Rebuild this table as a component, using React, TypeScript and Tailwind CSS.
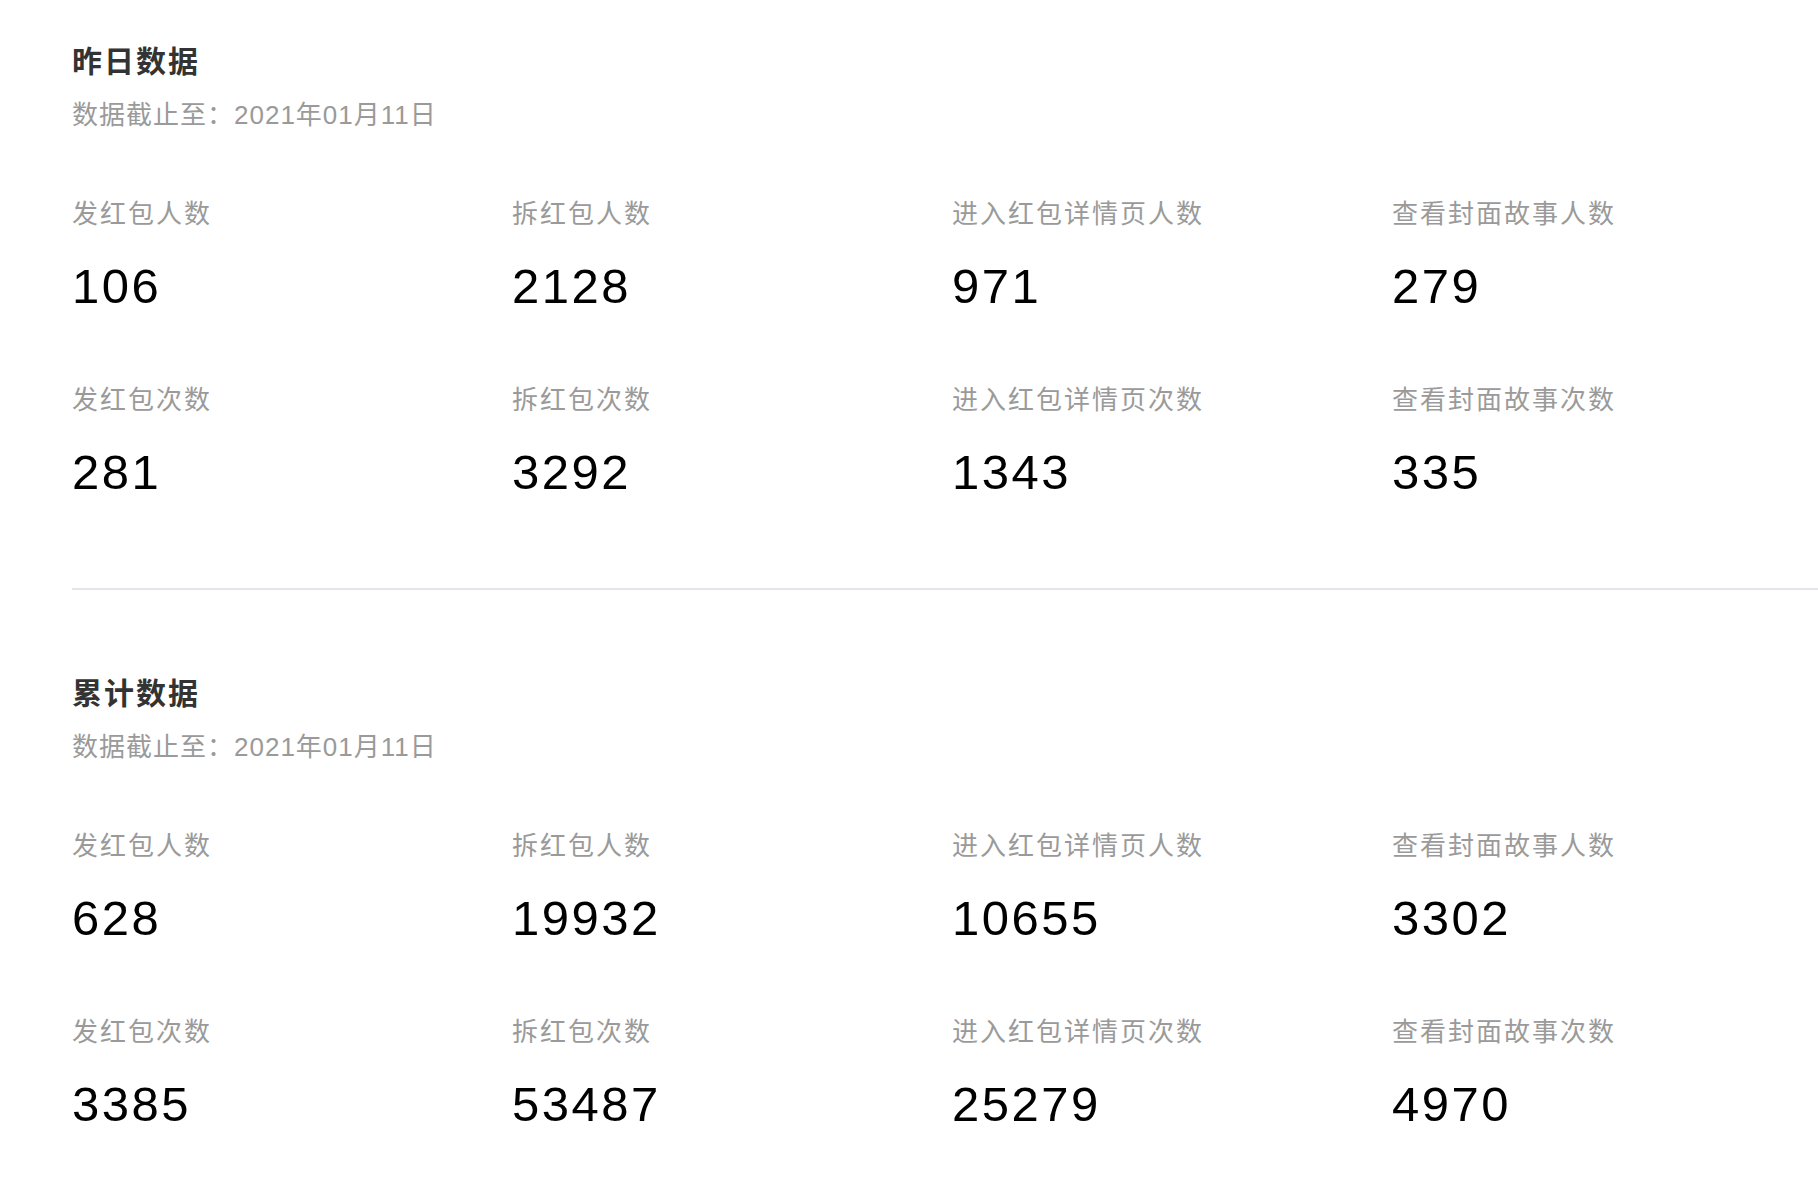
const sections = [
  {
    title: '昨日数据',
    date: '2021年01月11日',
    stats: [
      { label: '发红包人数', value: '106' },
      { label: '拆红包人数', value: '2128' },
      { label: '进入红包详情页人数', value: '971' },
      { label: '查看封面故事人数', value: '279' },
      { label: '发红包次数', value: '281' },
      { label: '拆红包次数', value: '3292' },
      { label: '进入红包详情页次数', value: '1343' },
      { label: '查看封面故事次数', value: '335' },
    ],
  },
  {
    title: '累计数据',
    date: '2021年01月11日',
    stats: [
      { label: '发红包人数', value: '628' },
      { label: '拆红包人数', value: '19932' },
      { label: '进入红包详情页人数', value: '10655' },
      { label: '查看封面故事人数', value: '3302' },
      { label: '发红包次数', value: '3385' },
      { label: '拆红包次数', value: '53487' },
      { label: '进入红包详情页次数', value: '25279' },
      { label: '查看封面故事次数', value: '4970' },
    ],
  },
]

const cjk = "font-['Liberation_Sans','Noto_Sans_CJK_SC',sans-serif]"

function Section({ title, date, stats }: (typeof sections)[number]) {
  return (
    <div>
      <h2 className={`${cjk} text-[30px] leading-[40px] tracking-[2px] font-bold text-[#333333]`}>{title}</h2>
      <p className={`${cjk} mt-[15px] text-[26px] leading-[36px] tracking-[1px] text-[#9a9a9a]`}>
        数据截止至：{date}
      </p>

      <div className="mt-[63px] grid grid-cols-[440px_440px_440px_1fr] gap-y-[68px]">
        {stats.map(({ label, value }) => (
          <div key={label} className="flex flex-col">
            <span className={`${cjk} text-[26px] leading-[36px] tracking-[2px] text-[#9a9a9a]`}>{label}</span>
            <span className="mt-[26px] font-['Liberation_Sans',sans-serif] text-[49px] leading-[56px] tracking-[2.5px] text-black">
              {value}
            </span>
          </div>
        ))}
      </div>
    </div>
  )
}

export default function App() {
  return (
    <div className="min-h-screen w-full overflow-hidden bg-white pl-[72px]">
      {/* 昨日 */}
      <div className="pt-[42px] pb-[88px]">
        <Section {...sections[0]} />
      </div>

      <div className="h-[2px] bg-[#e3e6ea]" />

      {/* 累计 */}
      <div className="pt-[84px] pb-10">
        <Section {...sections[1]} />
      </div>
    </div>
  )
}
